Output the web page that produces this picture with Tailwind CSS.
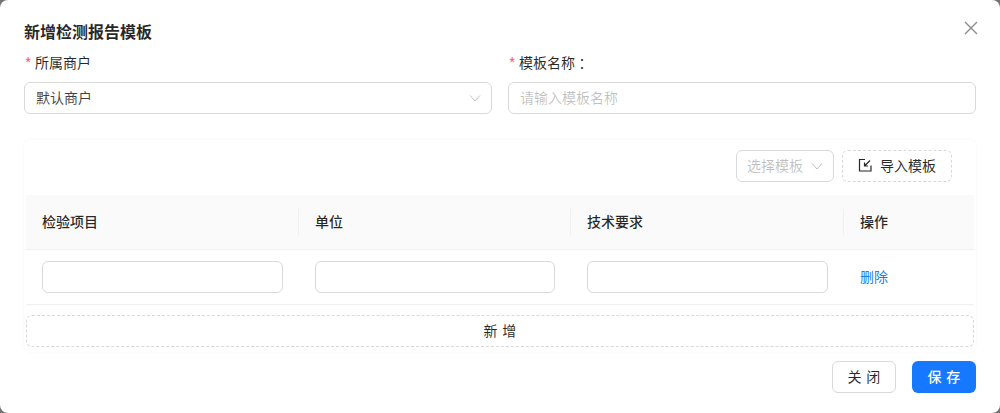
<!DOCTYPE html>
<html lang="zh">
<head>
<meta charset="utf-8">
<script src="https://cdn.jsdelivr.net/npm/@tailwindcss/browser@4"></script>
</head>
<body class="m-0 bg-[#737373] font-['Inter','Noto_Sans_CJK_SC',sans-serif] text-[14px] text-black/85">
<div class="relative w-[1000px] h-[413px] bg-white rounded-lg overflow-hidden px-6 pt-[20px]">
  <h1 class="h-[24px] text-[16px] leading-[24px] font-semibold text-black/85">新增检测报告模板</h1>
  <button class="absolute right-[21px] top-[20px] w-[16px] h-[16px] text-[#8c8c8c]">
    <svg viewBox="0 0 16 16" class="w-4 h-4" fill="none" stroke="currentColor" stroke-width="1.4"><path d="M2 2l12 12M14 2L2 14"/></svg>
  </button>
  <div class="grid grid-cols-2 gap-x-4 mt-[8px]">
    <div>
      <label class="flex items-center h-[22px] leading-[22px]"><span class="text-[#ff4d4f] w-[11px] font-['Liberation_Mono'] pt-[2px]">*</span>所属商户</label>
      <div class="mt-[8px] h-[32px] pb-[2px] border border-[#d9d9d9] rounded-md flex items-center justify-between pl-[11px] pr-[10px] text-black/75">
        <span>默认商户</span>
        <svg viewBox="0 0 12 12" class="w-[12px] h-[12px] mt-[2px] text-black/25" fill="none" stroke="currentColor" stroke-width="1"><path d="M1 3.5l5 5.5 5-5.5"/></svg>
      </div>
    </div>
    <div>
      <label class="flex items-center h-[22px] leading-[22px]"><span class="text-[#ff4d4f] w-[11px] font-['Liberation_Mono'] pt-[2px]">*</span>模板名称<span class="font-['Noto_Sans_CJK_TC']">：</span></label>
      <input class="block mt-[8px] w-full h-[32px] pb-[2px] border border-[#d9d9d9] rounded-md px-[11px] outline-none placeholder:text-black/25" placeholder="请输入模板名称">
    </div>
  </div>
  <div class="mt-[26px] shadow-[0_0_3px_rgba(0,0,0,0.04)] px-[2px] h-[212px] rounded-md">
    <div class="h-[55px] flex justify-end items-start gap-2 pt-[10px] pr-[22px]">
      <div class="h-[32px] w-[98px] pb-[2px] border border-[#d9d9d9] rounded-md flex items-center justify-center gap-[8px] text-black/25">
        <span>选择模板</span>
        <svg viewBox="0 0 12 12" class="w-[12px] h-[12px] mt-[2px]" fill="none" stroke="currentColor" stroke-width="1"><path d="M1 3.5l5 5.5 5-5.5"/></svg>
      </div>
      <div class="h-[32px] w-[110px] pb-[2px] border border-dashed border-[#d9d9d9] rounded-md flex items-center justify-center gap-[8px]">
        <svg viewBox="0 0 14 14" class="w-[14px] h-[14px]" fill="none" stroke="currentColor" stroke-width="1.2"><path d="M7 1.5H1.5V13H13V7.5M12 2.5L6.5 8M6.5 4.5V8H10" /></svg>
        <span>导入模板</span>
      </div>
    </div>
    <div class="grid grid-cols-[273px_272px_273px_130px]">
      <div class="h-[55px] pb-[2px] bg-[#fafafa] border-b border-[#f0f0f0] flex items-center px-4 font-medium relative after:absolute after:right-0 after:top-[14px] after:h-[27px] after:w-px after:bg-[#f0f0f0]">检验项目</div>
      <div class="h-[55px] pb-[2px] bg-[#fafafa] border-b border-[#f0f0f0] flex items-center px-4 font-medium relative after:absolute after:right-0 after:top-[14px] after:h-[27px] after:w-px after:bg-[#f0f0f0]">单位</div>
      <div class="h-[55px] pb-[2px] bg-[#fafafa] border-b border-[#f0f0f0] flex items-center px-4 font-medium relative after:absolute after:right-0 after:top-[14px] after:h-[27px] after:w-px after:bg-[#f0f0f0]">技术要求</div>
      <div class="h-[55px] pb-[2px] bg-[#fafafa] border-b border-[#f0f0f0] flex items-center px-4 font-medium">操作</div>
      <div class="h-[55px] border-b border-[#f0f0f0] flex items-center px-4"><input class="w-full h-[32px] border border-[#d9d9d9] rounded-md outline-none"></div>
      <div class="h-[55px] border-b border-[#f0f0f0] flex items-center px-4"><input class="w-full h-[32px] border border-[#d9d9d9] rounded-md outline-none"></div>
      <div class="h-[55px] border-b border-[#f0f0f0] flex items-center px-4"><input class="w-full h-[32px] border border-[#d9d9d9] rounded-md outline-none"></div>
      <div class="h-[55px] pb-[2px] border-b border-[#f0f0f0] flex items-center px-4 text-[#1a80e6]">删除</div>
    </div>
    <div class="mt-[10px] h-[32px] pb-[2px] border border-dashed border-[#d9d9d9] rounded-md flex items-center justify-center"><span class="tracking-[0.34em] mr-[-0.34em]">新增</span></div>
  </div>
  <div class="flex justify-end gap-4 mt-[9px]">
    <button class="h-[32px] w-[64px] pb-[2px] border border-[#d9d9d9] rounded-md bg-white"><span class="tracking-[0.34em] mr-[-0.34em]">关闭</span></button>
    <button class="h-[32px] w-[64px] pb-[2px] rounded-md bg-[#1677ff] text-white font-medium"><span class="tracking-[0.34em] mr-[-0.34em]">保存</span></button>
  </div>
</div>
</body>
</html>
